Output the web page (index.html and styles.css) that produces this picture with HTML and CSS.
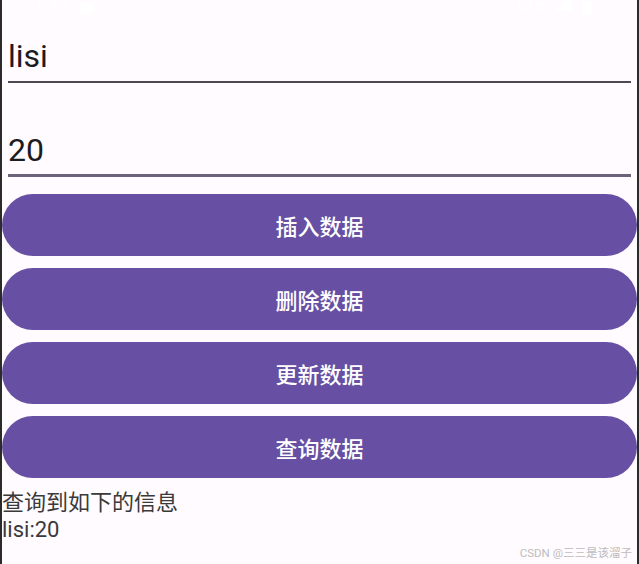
FILE: index.html
```html
<!DOCTYPE html>
<html lang="zh">
<head>
<meta charset="utf-8">
<title>SQLite Demo</title>
<link rel="stylesheet" href="styles.css">
</head>
<body>
<div class="frame">
  <div class="status">
    <div class="status-left">
      <span class="clock">1:49</span>
      <span class="sq"></span>
    </div>
    <div class="status-right">
      <span class="lte">LTE</span>
      <svg class="signal" width="18" height="14" viewBox="0 0 18 14"><polygon points="18,0 18,14 0,14" fill="#ffffff"/></svg>
      <span class="battery"></span>
    </div>
  </div>
  <div class="field">
    <div class="field-text">lisi</div>
  </div>
  <div class="field field-focused">
    <div class="field-text">20</div>
  </div>
  <div class="buttons">
    <div class="btn">插入数据</div>
    <div class="btn">删除数据</div>
    <div class="btn">更新数据</div>
    <div class="btn">查询数据</div>
  </div>
  <div class="result">
    <div>查询到如下的信息</div>
    <div>lisi:20</div>
  </div>
  <div class="watermark">CSDN @三三是该溜子</div>
</div>
</body>
</html>
```

FILE: styles.css
```css
html, body {
  margin: 0;
  padding: 0;
}
body {
  background: #fffbfe;
  font-family: Roboto, "Noto Sans CJK SC", sans-serif;
}
.frame {
  position: relative;
  box-sizing: border-box;
  width: 639px;
  height: 564px;
  border-left: 2px solid #2b2b2b;
  border-right: 2px solid #2b2b2b;
  background: #fffbfe;
  overflow: hidden;
}
.status {
  height: 24px;
  display: flex;
  justify-content: space-between;
  align-items: flex-start;
  padding: 0 45px 0 31px;
  color: #ffffff;
}
.status-left, .status-right {
  display: flex;
  align-items: flex-start;
  margin-top: -4px;
}
.clock {
  font-size: 18px;
  line-height: 18px;
}
.sq {
  width: 13px;
  height: 11px;
  background: #ffffff;
  margin: 7px 0 0 12px;
}
.lte {
  font-size: 18px;
  line-height: 18px;
  font-weight: 500;
}
.signal {
  margin: 1px 0 0 7px;
}
.battery {
  width: 10px;
  height: 12px;
  background: #ffffff;
  margin: 6px 0 0 11px;
}
.field {
  margin: 0 6px;
  padding: 12px 0 5px 0;
  border-bottom: 2px solid #4d4853;
}
.field-focused {
  margin-top: 35px;
  padding-bottom: 4px;
  border-bottom: 3px solid #6b6479;
}
.field-text {
  font-size: 32px;
  line-height: 40px;
  color: #1c1b1f;
}
.buttons {
  margin-top: 17px;
  display: flex;
  flex-direction: column;
  gap: 12px;
}
.btn {
  height: 62px;
  border-radius: 31px;
  background: #6750a4;
  color: #ffffff;
  font-size: 22px;
  font-weight: 500;
  display: flex;
  align-items: center;
  justify-content: center;
}
.result {
  margin-top: 11px;
  font-size: 22px;
  line-height: 27px;
  color: #3a3a3a;
}
.watermark {
  position: absolute;
  right: 5px;
  bottom: 5px;
  font-size: 11.5px;
  line-height: 1;
  color: #bdbdbd;
}
```
